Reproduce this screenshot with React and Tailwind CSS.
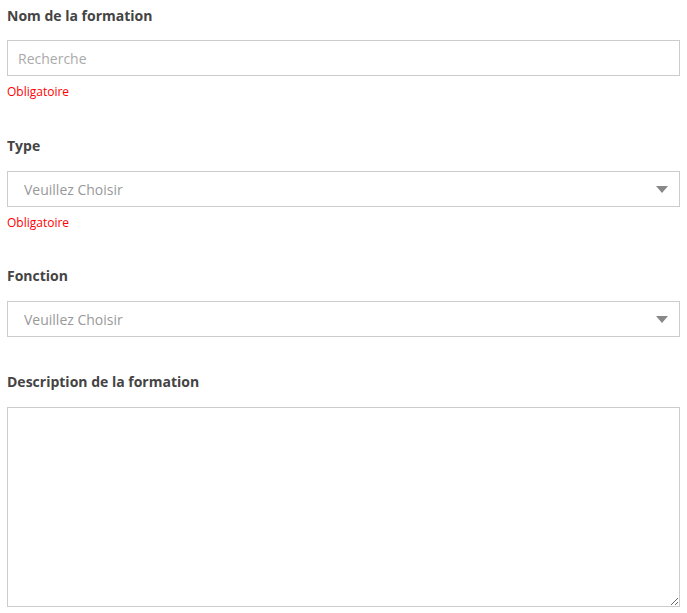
// Formation form - name, type, function, description
import React, { useState } from 'react';

const FONT = { fontFamily: '"Open Sans", "Noto Sans", sans-serif' };

const Label = ({ children }) => (
  <label className="block text-[14px] leading-[20px] font-bold text-[#444]">{children}</label>
);

const Required = () => (
  <p className="text-[12px] leading-[16px] text-[#ff0000]">Obligatoire</p>
);

const Select = ({ value, onChange }) => (
  <div className="relative mt-[15px]">
    <select
      value={value}
      onChange={(e) => onChange(e.target.value)}
      className="w-full h-[36px] appearance-none border border-[#ccc] bg-white pl-[16px] pr-10 text-[14px] text-[#999] outline-none"
    >
      <option value="">Veuillez Choisir</option>
    </select>
    <svg
      className="absolute right-[12px] top-[15px] pointer-events-none"
      width="12"
      height="7"
      viewBox="0 0 12 7"
    >
      <polygon points="0,0 12,0 6,7" fill="#888" />
    </svg>
  </div>
);

export default function App() {
  const [name, setName] = useState('');
  const [type, setType] = useState('');
  const [fonction, setFonction] = useState('');
  const [description, setDescription] = useState('');

  return (
    <div className="bg-white px-[7px] pt-[6px] pb-[6px]" style={FONT}>
      {/* Nom */}
      <div>
        <Label>Nom de la formation</Label>
        <input
          value={name}
          onChange={(e) => setName(e.target.value)}
          placeholder="Recherche"
          className="mt-[14px] w-full h-[36px] border border-[#ccc] px-[10px] text-[14px] text-[#555] placeholder:text-[#aaa] outline-none"
        />
        <div className="mt-[8px]">
          <Required />
        </div>
      </div>

      {/* Type */}
      <div className="mt-[36px]">
        <Label>Type</Label>
        <Select value={type} onChange={setType} />
        <div className="mt-[8px]">
          <Required />
        </div>
      </div>

      {/* Fonction */}
      <div className="mt-[35px]">
        <Label>Fonction</Label>
        <Select value={fonction} onChange={setFonction} />
      </div>

      {/* Description */}
      <div className="mt-[35px]">
        <Label>Description de la formation</Label>
        <textarea
          value={description}
          onChange={(e) => setDescription(e.target.value)}
          className="mt-[15px] block w-full h-[200px] border border-[#ccc] p-[10px] text-[14px] text-[#555] outline-none"
        />
      </div>
    </div>
  );
}
